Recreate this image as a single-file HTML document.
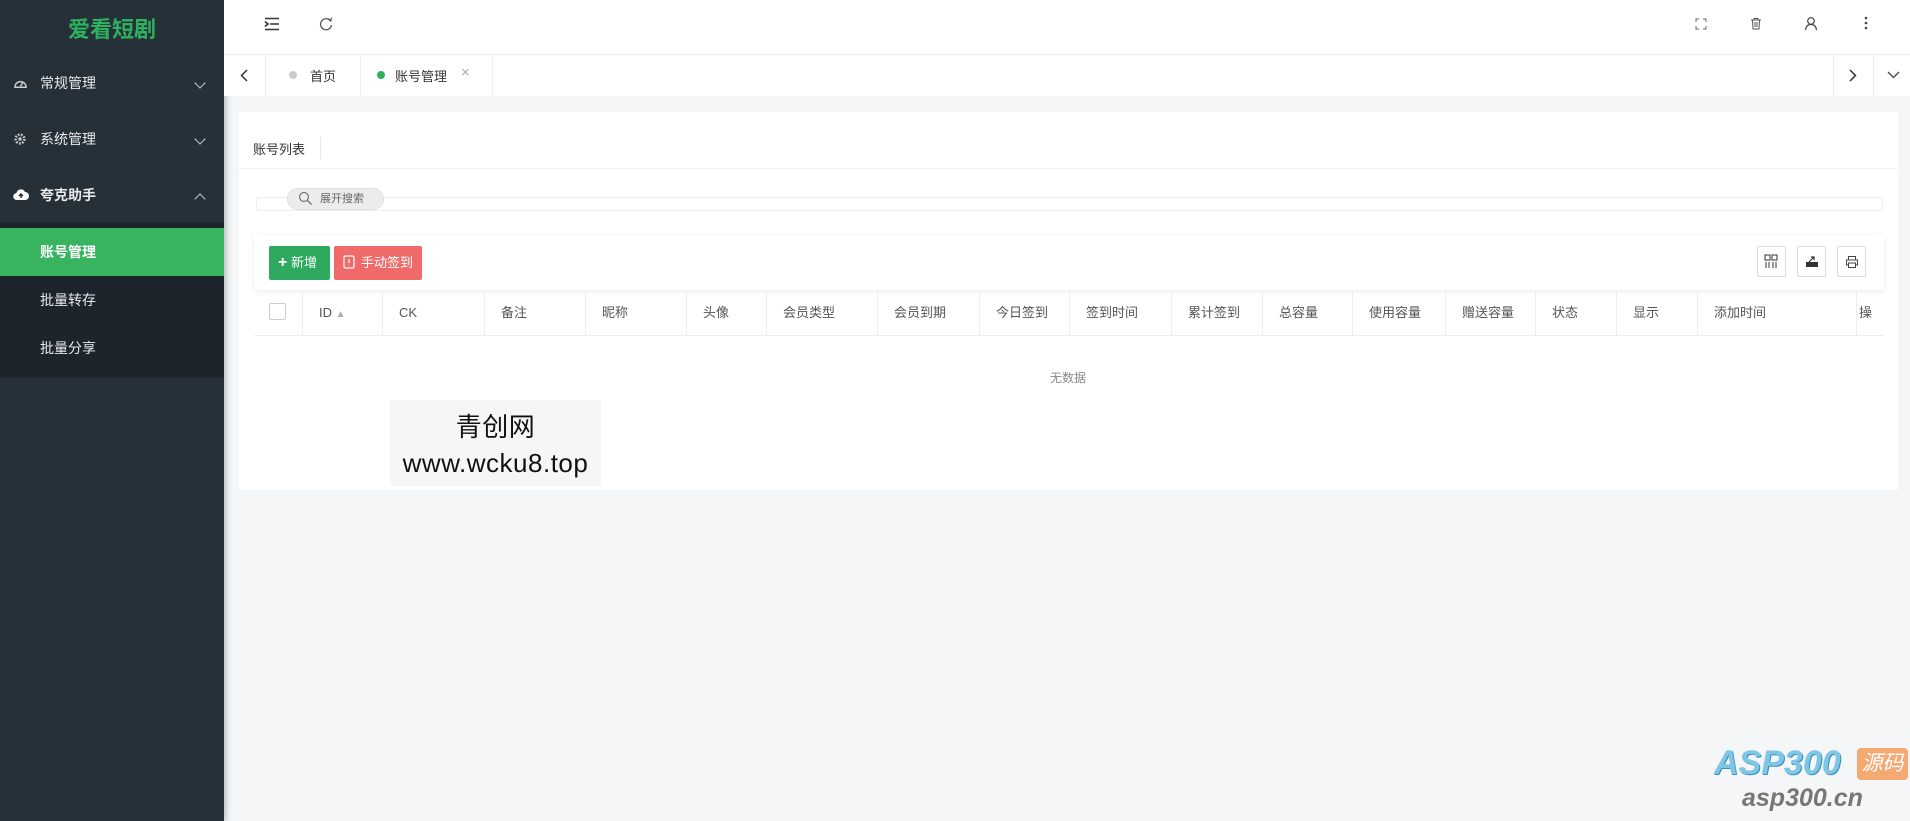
<!DOCTYPE html>
<html><head><meta charset="utf-8"><style>
*{box-sizing:border-box;margin:0;padding:0}
body{width:1910px;height:821px;overflow:hidden;background:#f5f6f7;font-family:"Liberation Sans","Noto Sans CJK SC",sans-serif;font-size:14px;color:#333;position:relative}
.abs{position:absolute}
#side{left:0;top:0;width:224px;height:821px;background:#263039;box-shadow:2px 0 6px rgba(0,0,0,.25)}
.logo{left:0;top:12px;width:224px;text-align:center;color:#2eb15f;font-size:22px;font-weight:bold}
.mi{left:0;width:224px;height:56px;line-height:56px;color:#e8eaec;font-size:14px}
.mi span{position:absolute;left:40px}
.mi i{position:absolute;left:13px;top:0;font-style:normal;color:#bfc4c8;font-size:13px}
.chev{position:absolute;left:196px;top:24px;width:8px;height:8px;border-right:1.5px solid #c9cdd0;border-bottom:1.5px solid #c9cdd0;transform:rotate(45deg)}
.chev.up{transform:rotate(-135deg);top:28px}
#sub{left:0;top:222px;width:224px;height:156px;background:#1d242b}
.si{left:0;width:224px;height:48px;line-height:48px;color:#e8eaec;padding-left:40px}
#hdr{left:224px;top:0;width:1686px;height:55px;background:#fff;border-bottom:1px solid #eee}
#tabs{left:224px;top:55px;width:1686px;height:41px;background:#fff}
.vd{position:absolute;top:0;width:1px;height:41px;background:#eee}
.card{left:239px;top:112px;width:1659px;height:378px;background:#fff}
.col{position:absolute;top:290px;height:46px;line-height:46px;color:#555;font-size:13px;border-left:1px solid #eee}
.tb{position:absolute;top:246px;width:29px;height:31px;border:1px solid #ddd;border-radius:2px}
</style></head><body>
<div id="side" class="abs">
 <div class="logo abs">爱看短剧</div>
 <div class="mi abs" style="top:55px"><i>
  <svg width="15" height="15" viewBox="0 0 16 16" style="margin-top:21px"><path d="M2 12A6 6 0 1 1 14 12Z" fill="none" stroke="#c9cdd0" stroke-width="1.5"/><path d="M8 11L11 6" stroke="#c9cdd0" stroke-width="1.5"/></svg></i><span>常规管理</span><b class="chev"></b></div>
 <div class="mi abs" style="top:111px"><i><svg width="14" height="14" viewBox="0 0 16 16" style="margin-top:21px"><circle cx="8" cy="8" r="5" fill="none" stroke="#bfc4c8" stroke-width="3" stroke-dasharray="2 1.5"/><circle cx="8" cy="8" r="2" fill="#bfc4c8"/></svg></i><span>系统管理</span><b class="chev"></b></div>
 <div class="mi abs" style="top:167px"><i><svg width="16" height="14" viewBox="0 0 16 14" style="margin-top:21px"><path d="M4 12A3.5 3.5 0 0 1 3.5 5A4.5 4.5 0 0 1 12 4A3.8 3.8 0 0 1 12 12Z" fill="#fff"/><path d="M8 10V6M6 8l2-2 2 2" stroke="#263039" stroke-width="1.5" fill="none"/></svg></i><span style="font-weight:bold">夸克助手</span><b class="chev up"></b></div>
 <div id="sub" class="abs">
  <div class="si abs" style="top:6px;background:#38b460;font-weight:bold;color:#fff">账号管理</div>
  <div class="si abs" style="top:54px">批量转存</div>
  <div class="si abs" style="top:102px">批量分享</div>
 </div>
</div>
<div id="hdr" class="abs">
 <svg class="abs" style="left:40px;top:17px" width="16" height="14" viewBox="0 0 16 14"><path d="M1 1.5H15M6 7H15M1 12.5H15M1 4.5L4 7 1 9.5" stroke="#333" stroke-width="1.6" fill="none"/></svg>
 <svg class="abs" style="left:95px;top:17px" width="14" height="14" viewBox="0 0 14 14"><path d="M11.5 4A5.5 5.5 0 1 0 12.5 8" stroke="#555" stroke-width="1.3" fill="none"/><path d="M9 1.5L11.7 4 12.5 .8" stroke="#555" stroke-width="1.3" fill="none"/></svg>
 <svg class="abs" style="left:1471px;top:18px" width="12" height="12" viewBox="0 0 12 12"><path d="M1 4V1H4M8 1H11V4M11 8V11H8M4 11H1V8" stroke="#666" fill="none"/></svg>
 <svg class="abs" style="left:1526px;top:17px" width="12" height="13" viewBox="0 0 12 13"><path d="M1 3H11M4 3V1.5H8V3M2.5 3L3 12H9L9.5 3M5 5V10M7 5V10" stroke="#555" fill="none"/></svg>
 <svg class="abs" style="left:1580px;top:16px" width="14" height="15" viewBox="0 0 14 15"><circle cx="7" cy="5" r="3.3" stroke="#444" stroke-width="1.2" fill="none"/><path d="M1.5 14C2 10 4 8.5 7 8.5S12 10 12.5 14" stroke="#444" stroke-width="1.2" fill="none"/></svg>
 <svg class="abs" style="left:1640px;top:16px" width="4" height="14"><circle cx="2" cy="2" r="1.3" fill="#444"/><circle cx="2" cy="7" r="1.3" fill="#444"/><circle cx="2" cy="12" r="1.3" fill="#444"/></svg>
</div>
<div id="tabs" class="abs">
 <svg class="abs" style="left:16px;top:14px" width="8" height="13"><path d="M7 1L1.5 6.5 7 12" stroke="#333" stroke-width="1.5" fill="none"/></svg>
 <div class="vd" style="left:41px"></div>
 <div class="abs" style="left:65px;top:16px;width:8px;height:8px;border-radius:50%;background:#ccc"></div>
 <div class="abs" style="left:86px;top:11px;font-size:13px;color:#333">首页</div>
 <div class="vd" style="left:136px"></div>
 <div class="abs" style="left:153px;top:16px;width:8px;height:8px;border-radius:50%;background:#2eb15f"></div>
 <div class="abs" style="left:171px;top:11px;font-size:13px;color:#333">账号管理</div>
 <div class="abs" style="left:237px;top:9px;font-size:15px;color:#aaa">×</div>
 <div class="vd" style="left:268px"></div>
 <div class="vd" style="left:1609px"></div>
 <svg class="abs" style="left:1625px;top:14px" width="8" height="13"><path d="M1 1L6.5 6.5 1 12" stroke="#333" stroke-width="1.5" fill="none"/></svg>
 <div class="vd" style="left:1649px"></div>
 <svg class="abs" style="left:1663px;top:16px" width="13" height="8"><path d="M1 1L6.5 6.5 12 1" stroke="#444" stroke-width="1.3" fill="none"/></svg>
</div>
<div class="card abs"></div>
<div class="abs" style="left:253px;top:139px;font-size:13px;color:#333">账号列表</div>
<div class="abs" style="left:320px;top:137px;width:1px;height:22px;background:#e6e6e6"></div>
<div class="abs" style="left:239px;top:168px;width:1659px;height:1px;background:#f2f2f2"></div>
<div class="abs" style="left:256px;top:197px;width:1627px;height:14px;border:1px solid #eee;border-radius:2px"></div>
<div class="abs" style="left:287px;top:188px;width:97px;height:22px;border-radius:11px;background:#ececec;border:1px solid #e0e0e0;font-size:11px;color:#666;line-height:20px;padding-left:32px">展开搜索</div>
<svg class="abs" style="left:298px;top:191px" width="15" height="15" viewBox="0 0 15 15"><circle cx="6" cy="6" r="4.5" stroke="#777" fill="none" stroke-width="1.2"/><path d="M9.5 9.5L13.5 13.5" stroke="#777" stroke-width="1.4"/></svg>
<div class="abs" style="left:254px;top:235px;width:1630px;height:55px;background:#fff;box-shadow:0 1px 6px rgba(0,0,0,.08)"></div>
<div class="abs" style="left:269px;top:246px;width:61px;height:34px;background:#2eaa5e;border-radius:2px;color:#fff;font-size:13px;line-height:34px;padding-left:9px"><b style="font-size:16px">+</b> 新增</div>
<div class="abs" style="left:334px;top:246px;width:88px;height:34px;background:#f06a6a;border-radius:2px;color:#fff;font-size:13px;line-height:34px;padding-left:27px">手动签到</div>
<svg class="abs" style="left:343px;top:255px" width="13" height="15"><rect x="1" y="1" width="10" height="12" rx="1.5" stroke="#fff" fill="none" stroke-width="1.2"/><path d="M6 4V8M6 10V10.5" stroke="#fff" stroke-width="1.3"/></svg>
<div class="tb" style="left:1757px"></div>
<svg class="abs" style="left:1764px;top:254px" width="14" height="15"><rect x="1" y="1" width="5" height="5" stroke="#333" fill="none"/><rect x="8" y="1" width="5" height="5" stroke="#333" fill="none"/><path d="M2 8V14M5 8V14M9 8V14M12 8V14" stroke="#333"/></svg>
<div class="tb" style="left:1797px"></div>
<svg class="abs" style="left:1805px;top:255px" width="14" height="13"><path d="M4 7L9 2M6 2H9V5" stroke="#333" stroke-width="1.2" fill="none"/><rect x="1" y="7" width="12" height="5" fill="#333"/></svg>
<div class="tb" style="left:1837px"></div>
<svg class="abs" style="left:1845px;top:255px" width="14" height="14"><path d="M3.5 5V1.5H10.5V5M3.5 10H1.5V5H12.5V10H10.5M3.5 8H10.5V12.5H3.5Z" stroke="#444" fill="none"/></svg>
<div class="abs" style="left:254px;top:335px;width:1630px;height:1px;background:#eee"></div>
<div class="abs" style="left:269px;top:303px;width:17px;height:17px;border:1px solid #ccc;border-radius:2px;background:#fff"></div>
<div class="col" style="left:302px;padding-left:16px;width:80px">ID <span style="color:#aaa;font-size:10px">&#9650;&#xFE0E;</span></div>
<div class="col" style="left:382px;padding-left:16px;width:102px">CK</div>
<div class="col" style="left:484px;padding-left:16px">备注</div>
<div class="col" style="left:585px;padding-left:16px">昵称</div>
<div class="col" style="left:686px;padding-left:16px">头像</div>
<div class="col" style="left:766px;padding-left:16px">会员类型</div>
<div class="col" style="left:877px;padding-left:16px">会员到期</div>
<div class="col" style="left:979px;padding-left:16px">今日签到</div>
<div class="col" style="left:1069px;padding-left:16px">签到时间</div>
<div class="col" style="left:1171px;padding-left:16px">累计签到</div>
<div class="col" style="left:1262px;padding-left:16px">总容量</div>
<div class="col" style="left:1352px;padding-left:16px">使用容量</div>
<div class="col" style="left:1445px;padding-left:16px">赠送容量</div>
<div class="col" style="left:1535px;padding-left:16px">状态</div>
<div class="col" style="left:1616px;padding-left:16px">显示</div>
<div class="col" style="left:1697px;padding-left:16px">添加时间</div>
<div class="col" style="left:1856px;padding-left:2px;width:28px;overflow:hidden">操</div>
<div class="abs" style="left:1050px;top:369px;font-size:12px;color:#888">无数据</div>
<div class="abs" style="left:390px;top:400px;width:211px;height:86px;background:#f6f6f6;text-align:center;font-size:26px;color:#111;line-height:36px;padding-top:9px;letter-spacing:.5px">青创网<br>www.wcku8.top</div>
<div class="abs" style="left:1714px;top:744px;font-size:34px;font-weight:bold;font-style:italic;color:#7fc6e6;text-shadow:1px 1px 0 #3d8fb8">ASP300</div>
<div class="abs" style="left:1857px;top:748px;width:51px;height:32px;background:#f4a972;border-radius:4px;color:#fff;font-size:21px;font-style:italic;text-align:center;line-height:32px">源码</div>
<div class="abs" style="left:1742px;top:784px;font-size:25px;font-weight:bold;font-style:italic;color:#777">asp300.cn</div>
</body></html>
